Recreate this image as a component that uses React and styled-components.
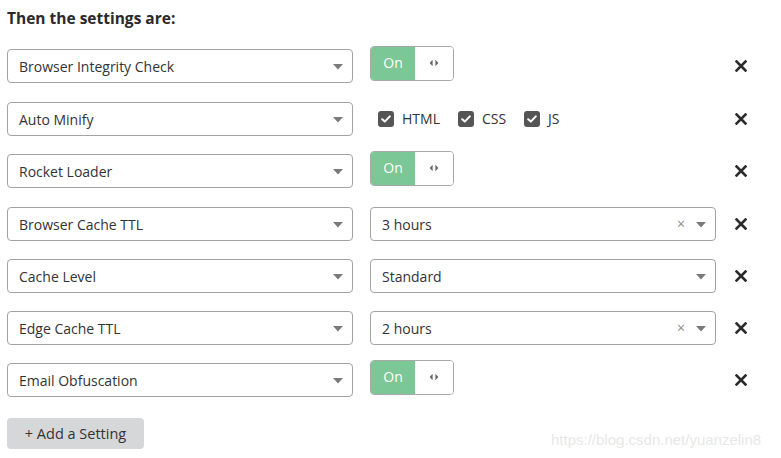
import React from "react";
import styled, { createGlobalStyle } from "styled-components";

const GlobalStyle = createGlobalStyle`
  body {
    margin: 0;
    background: #ffffff;
    font-family: "Open Sans", "Noto Sans", sans-serif;
    color: #333333;
  }
`;

const settings = [
  { name: "Browser Integrity Check", type: "toggle" },
  { name: "Auto Minify", type: "checks" },
  { name: "Rocket Loader", type: "toggle" },
  { name: "Browser Cache TTL", type: "select", value: "3 hours", clearable: true },
  { name: "Cache Level", type: "select", value: "Standard" },
  { name: "Edge Cache TTL", type: "select", value: "2 hours", clearable: true },
  { name: "Email Obfuscation", type: "toggle" }
];

const Caret = () => (
  <CaretIcon width="10" height="6" viewBox="0 0 10 6">
    <path d="M0 0 L10 0 L5 5.5 Z" fill="#7a7a7a" />
  </CaretIcon>
);

const Check = () => (
  <CheckBox>
    <svg width="10" height="8" viewBox="0 0 10 8">
      <path
        d="M1.2 4.2 L3.8 6.6 L8.8 1.4"
        fill="none"
        stroke="#ffffff"
        strokeWidth="2"
        strokeLinecap="round"
        strokeLinejoin="round"
      />
    </svg>
  </CheckBox>
);

const Remove = () => (
  <RemoveButton>
    <svg width="12" height="12" viewBox="0 0 12 12">
      <path
        d="M1.5 1.5 L10.5 10.5 M10.5 1.5 L1.5 10.5"
        stroke="#2b2b2b"
        strokeWidth="2.6"
        strokeLinecap="square"
      />
    </svg>
  </RemoveButton>
);

const Toggle = () => (
  <ToggleWrap>
    <ToggleOn>On</ToggleOn>
    <ToggleHandle>
      <svg width="10" height="8" viewBox="0 0 10 8">
        <path d="M3.6 0.8 L0.6 4 L3.6 7.2 Z M6.4 0.8 L9.4 4 L6.4 7.2 Z" fill="#666666" />
      </svg>
    </ToggleHandle>
  </ToggleWrap>
);

const SettingValue = ({ setting }) => {
  if (setting.type === "toggle") return <Toggle />;
  if (setting.type === "checks") {
    return (
      <Checks>
        {["HTML", "CSS", "JS"].map(label => (
          <CheckItem key={label}>
            <Check />
            {label}
          </CheckItem>
        ))}
      </Checks>
    );
  }
  return (
    <Select>
      <SelectText>{setting.value}</SelectText>
      {setting.clearable && <Clear>×</Clear>}
      <Caret />
    </Select>
  );
};

export default function App() {
  return (
    <Page>
      <GlobalStyle />
      <Heading>Then the settings are:</Heading>
      <List>
        {settings.map(setting => (
          <Row key={setting.name} $toggle={setting.type === "toggle"}>
            <Select>
              <SelectText>{setting.name}</SelectText>
              <Caret />
            </Select>
            <ValueCell>
              <SettingValue setting={setting} />
            </ValueCell>
            <Remove />
          </Row>
        ))}
      </List>
      <AddButton>+ Add a Setting</AddButton>
      <Watermark>https://blog.csdn.net/yuanzelin8</Watermark>
    </Page>
  );
}

const Page = styled.div`
  position: relative;
  width: 781px;
  height: 458px;
  box-sizing: border-box;
  padding: 7px 7px 0 7px;
  overflow: hidden;
`;

const Heading = styled.h3`
  margin: 0 0 20px 0;
  font-size: 15.5px;
  font-weight: 700;
  line-height: 22px;
  color: #2a2a2a;
`;

const List = styled.div`
  display: flex;
  flex-direction: column;
`;

const Row = styled.div`
  display: flex;
  align-items: flex-start;
  margin-bottom: 18px;
  padding-bottom: ${props => (props.$toggle ? "1px" : "0")};
`;

const Select = styled.div`
  width: 346px;
  height: 34px;
  box-sizing: border-box;
  border: 1px solid #a3a3a3;
  border-radius: 4px;
  background: #ffffff;
  display: flex;
  align-items: center;
  padding: 0 9px 0 11px;
  flex-shrink: 0;
`;

const SelectText = styled.span`
  flex: 1;
  font-size: 14px;
  color: #333333;
  white-space: nowrap;
`;

const CaretIcon = styled.svg`
  display: block;
  margin-top: 1px;
`;

const Clear = styled.span`
  font-size: 14px;
  color: #8a8a8a;
  margin-right: 11px;
  line-height: 1;
`;

const ValueCell = styled.div`
  width: 346px;
  margin-left: 17px;
  display: flex;
  align-items: center;
  height: 34px;
`;

const ToggleWrap = styled.div`
  display: flex;
  height: 35px;
  width: 84px;
  margin-top: -6px;
  box-sizing: border-box;
  border: 1px solid #a8a8a8;
  border-radius: 4px;
  overflow: hidden;
`;

const ToggleOn = styled.div`
  width: 44px;
  background: #7bc796;
  color: #ffffff;
  font-size: 14px;
  display: flex;
  align-items: center;
  justify-content: center;
  padding-bottom: 2px;
  box-sizing: border-box;
`;

const ToggleHandle = styled.div`
  flex: 1;
  background: #ffffff;
  display: flex;
  align-items: center;
  justify-content: center;
`;

const Checks = styled.div`
  display: flex;
  align-items: center;
  gap: 18px;
  padding-left: 8px;
  margin-top: -1px;
`;

const CheckItem = styled.label`
  display: flex;
  align-items: center;
  gap: 8px;
  font-size: 14px;
  color: #333333;
`;

const CheckBox = styled.span`
  width: 16px;
  height: 16px;
  border-radius: 3px;
  background: #555555;
  display: flex;
  align-items: center;
  justify-content: center;
`;

const RemoveButton = styled.div`
  height: 34px;
  margin-left: 19px;
  display: flex;
  align-items: center;
`;

const AddButton = styled.button`
  margin-top: 2px;
  width: 137px;
  height: 31px;
  border: none;
  border-radius: 4px;
  background: #d6d7d9;
  color: #333333;
  font-family: "Open Sans", "Noto Sans", sans-serif;
  font-size: 14.5px;
  padding: 0;
`;

const Watermark = styled.div`
  position: absolute;
  left: 551px;
  top: 431px;
  font-family: "Liberation Sans", Arial, sans-serif;
  font-size: 15px;
  color: #e8e8e8;
`;
